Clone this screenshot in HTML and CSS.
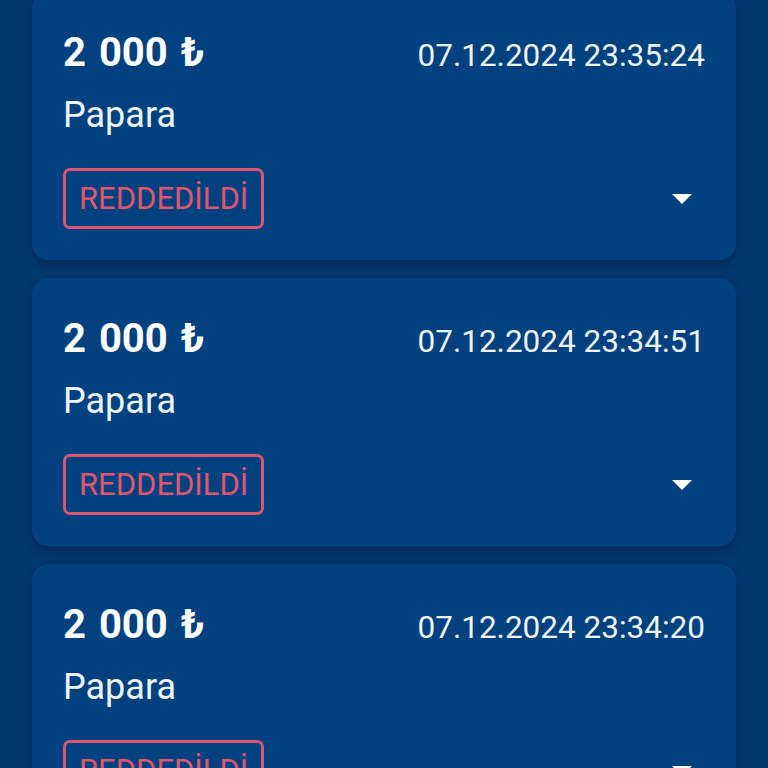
FILE: index.html
```html
<!DOCTYPE html>
<html lang="tr">
<head>
<meta charset="UTF-8">
<meta name="viewport" content="width=device-width, initial-scale=1.0">
<title>İşlem Geçmişi</title>
<link rel="stylesheet" href="styles.css">
</head>
<body>

<div class="list">
  <div class="card">
    <div class="top-row">
      <span class="amount">2 000 ₺</span>
      <span class="date">07.12.2024 23:35:24</span>
    </div>
    <div class="method">Papara</div>
    <div class="bottom-row">
      <span class="badge">REDDEDİLDİ</span>
      <svg class="arrow" width="20" height="10" viewBox="0 0 20 10"><polygon points="0,0 20,0 10,10" fill="#fff"/></svg>
    </div>
  </div>

  <div class="card">
    <div class="top-row">
      <span class="amount">2 000 ₺</span>
      <span class="date">07.12.2024 23:34:51</span>
    </div>
    <div class="method">Papara</div>
    <div class="bottom-row">
      <span class="badge">REDDEDİLDİ</span>
      <svg class="arrow" width="20" height="10" viewBox="0 0 20 10"><polygon points="0,0 20,0 10,10" fill="#fff"/></svg>
    </div>
  </div>

  <div class="card">
    <div class="top-row">
      <span class="amount">2 000 ₺</span>
      <span class="date">07.12.2024 23:34:20</span>
    </div>
    <div class="method">Papara</div>
    <div class="bottom-row">
      <span class="badge">REDDEDİLDİ</span>
      <svg class="arrow" width="20" height="10" viewBox="0 0 20 10"><polygon points="0,0 20,0 10,10" fill="#fff"/></svg>
    </div>
  </div>
</div>

</body>
</html>
```

FILE: styles.css
```css
html, body {
  margin: 0;
  height: 100%;
  overflow: hidden;
}
body {
  background-color: #03376f;
  font-family: Roboto, "Liberation Sans", sans-serif;
  color: #eef3fa;
}
.list {
  display: flex;
  flex-direction: column;
  gap: 18px;
  margin-top: -8px; /* listeyi biraz kaydırılmış göster */
  padding: 0 32px;
}
.card {
  background-color: #01417f;
  border-radius: 16px;
  padding: 37px 31px 31px;
  box-shadow: 0 5px 10px rgba(0, 16, 48, 0.35);
}
.top-row {
  display: flex;
  justify-content: space-between;
  align-items: baseline;
}
.amount {
  font-size: 40px;
  line-height: 48px;
  font-weight: 700;
  word-spacing: 3px;
  color: #fff;
}
.date {
  font-size: 31.5px;
  line-height: 48px;
}
.method {
  margin-top: 13px;
  font-size: 36px;
  line-height: 44px;
}
.bottom-row {
  margin-top: 31px;
  display: flex;
  justify-content: space-between;
  align-items: center;
}
.badge {
  border: 3px solid #dc5670;
  border-radius: 7px;
  padding: 0 13px;
  font-size: 31px;
  line-height: 55px;
  color: #e0566f;
}
.arrow {
  margin-right: 13px;
}
```
